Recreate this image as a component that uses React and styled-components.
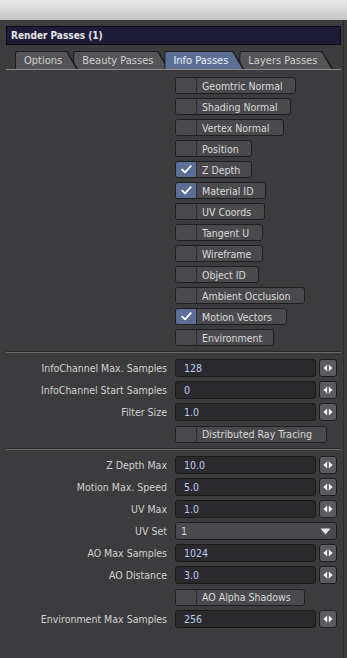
import React from "react";
import styled, { createGlobalStyle } from "styled-components";

const GlobalStyle = createGlobalStyle`
  html, body {
    margin: 0;
    padding: 0;
    background: #3c3c3e;
  }
  body {
    font-family: "DejaVu Sans Condensed", "DejaVu Sans", sans-serif;
  }
`;

const passes = [
  { label: "Geomtric Normal", width: 119 },
  { label: "Shading Normal", width: 114 },
  { label: "Vertex Normal", width: 107 },
  { label: "Position", width: 75 },
  { label: "Z Depth", width: 75, checked: true },
  { label: "Material ID", width: 89, checked: true },
  { label: "UV Coords", width: 88 },
  { label: "Tangent U", width: 86 },
  { label: "Wireframe", width: 86 },
  { label: "Object ID", width: 82 },
  { label: "Ambient Occlusion", width: 128 },
  { label: "Motion Vectors", width: 110, checked: true },
  { label: "Environment", width: 97 },
];

const tabs = ["Options", "Beauty Passes", "Info Passes", "Layers Passes"];

const CheckIcon = () => (
  <svg width="11" height="9" viewBox="0 0 11 9">
    <path
      d="M1.2 4.6 L4 7.4 L9.8 1.2"
      fill="none"
      stroke="#ffffff"
      strokeWidth="1.8"
      strokeLinecap="round"
      strokeLinejoin="round"
    />
  </svg>
);

const SpinIcon = () => (
  <svg width="10" height="8" viewBox="0 0 10 8">
    <path d="M4.2 0.5 L0.5 4 L4.2 7.5 Z" fill="#ffffff" />
    <path d="M5.8 0.5 L9.5 4 L5.8 7.5 Z" fill="#ffffff" />
  </svg>
);

const Toggle = ({ label, width, checked }) => (
  <ToggleButton style={{ width }}>
    <ToggleBox $checked={checked}>{checked && <CheckIcon />}</ToggleBox>
    <ToggleLabel>{label}</ToggleLabel>
  </ToggleButton>
);

const NumberField = ({ label, value }) => (
  <FieldRow>
    <FieldLabel>{label}</FieldLabel>
    <ValueBox>{value}</ValueBox>
    <Spinner>
      <SpinIcon />
    </Spinner>
  </FieldRow>
);

const ButtonRow = ({ label, width }) => (
  <FieldRow>
    <span />
    <Toggle label={label} width={width} />
  </FieldRow>
);

const App = () => {
  return (
    <Window>
      <GlobalStyle />
      <TitleStrip />
      <Panel>
        <Header>Render Passes (1)</Header>
        <TabBar>
          {tabs.map((tab, index) => (
            <Tab key={tab} $active={tab === "Info Passes"} $z={10 - index}>
              <TabFace $active={tab === "Info Passes"}>{tab}</TabFace>
            </Tab>
          ))}
        </TabBar>

        <PassList>
          {passes.map((pass) => (
            <Toggle key={pass.label} {...pass} />
          ))}
        </PassList>

        <Divider />

        <FieldGroup>
          <NumberField label="InfoChannel Max. Samples" value="128" />
          <NumberField label="InfoChannel Start Samples" value="0" />
          <NumberField label="Filter Size" value="1.0" />
          <ButtonRow label="Distributed Ray Tracing" width={150} />
        </FieldGroup>

        <Divider />

        <FieldGroup>
          <NumberField label="Z Depth Max" value="10.0" />
          <NumberField label="Motion Max. Speed" value="5.0" />
          <NumberField label="UV Max" value="1.0" />
          <FieldRow>
            <FieldLabel>UV Set</FieldLabel>
            <Select>
              <span>1</span>
              <svg width="11" height="7" viewBox="0 0 11 7">
                <path d="M0.5 0.5 H10.5 L5.5 6.5 Z" fill="#e6e6e6" />
              </svg>
            </Select>
          </FieldRow>
          <NumberField label="AO Max Samples" value="1024" />
          <NumberField label="AO Distance" value="3.0" />
          <ButtonRow label="AO Alpha Shadows" width={128} />
          <NumberField label="Environment Max Samples" value="256" />
        </FieldGroup>
      </Panel>
    </Window>
  );
};

const Window = styled.div`
  width: 347px;
  height: 658px;
  display: flex;
  flex-direction: column;
  overflow: hidden;
  background: #3c3c3e;
`;

const TitleStrip = styled.div`
  height: 20px;
  flex-shrink: 0;
  background: linear-gradient(#ececec, #c4c4c4);
`;

const Panel = styled.div`
  flex: 1;
  display: flex;
  flex-direction: column;
  padding: 6px 2px 0 6px;
  margin-right: 3px;
  border-right: 1px solid #2c2c2c;
  background: #3c3c3e;
`;

const Header = styled.div`
  height: 17px;
  display: flex;
  align-items: center;
  padding-left: 4px;
  background: #1e1c3a;
  border: 1px solid #0a0a0a;
  color: #e6e6e6;
  font-size: 10px;
  font-weight: bold;
`;

const TabBar = styled.div`
  display: flex;
  margin-top: 5px;
  padding-left: 9px;
  height: 19px;
  align-items: flex-end;
  border-bottom: 1px solid #8c8c8c;
`;

const Tab = styled.div`
  position: relative;
  flex-shrink: 0;
  z-index: ${(p) => (p.$active ? 20 : p.$z)};
  margin-right: -5px;
  padding: 1px 1px 0 1px;
  background: #1c1c1c;
  border-radius: 3px 0 0 0;
  clip-path: polygon(0 0, calc(100% - 11px) 0, 100% 100%, 0 100%);
`;

const TabFace = styled.div`
  height: 17px;
  display: flex;
  align-items: center;
  padding: 0 15px 0 8px;
  border-radius: 2px 0 0 0;
  white-space: nowrap;
  background: ${(p) => (p.$active ? "#5b6f96" : "#555559")};
  color: ${(p) => (p.$active ? "#eef0f6" : "#cfcfcf")};
  font-size: 11px;
  clip-path: polygon(0 0, calc(100% - 11px) 0, calc(100% - 1px) 100%, 0 100%);
`;

const PassList = styled.div`
  display: flex;
  flex-direction: column;
  align-items: flex-start;
  gap: 4px;
  padding: 7px 0 0 169px;
`;

const ToggleButton = styled.div`
  height: 15px;
  display: flex;
  border: 1px solid #1e1e1e;
  border-radius: 3px;
  background: #4a4a4e;
  overflow: hidden;
  flex-shrink: 0;
`;

const ToggleBox = styled.div`
  width: 20px;
  flex-shrink: 0;
  display: flex;
  align-items: center;
  justify-content: center;
  border-right: 1px solid #2e2e30;
  background: ${(p) => (p.$checked ? "#5b6f96" : "#4a4a4e")};
`;

const ToggleLabel = styled.div`
  display: flex;
  align-items: center;
  padding-left: 5px;
  color: #dadada;
  font-size: 10.5px;
  white-space: nowrap;
`;

const Divider = styled.div`
  height: 1px;
  margin: 5px 0 6px;
  background: #6a6a6a;
  border-top: 1px solid #2a2a2a;
`;

const FieldGroup = styled.div`
  display: flex;
  flex-direction: column;
  gap: 4px;
`;

const FieldRow = styled.div`
  display: grid;
  grid-template-columns: 161px 141px 18px;
  column-gap: 8px;
  height: 18px;
  align-items: center;

  & > :nth-child(3) {
    margin-left: -5px;
  }
`;

const FieldLabel = styled.div`
  text-align: right;
  color: #d2d2d2;
  font-size: 10.5px;
  white-space: nowrap;
`;

const ValueBox = styled.div`
  height: 16px;
  display: flex;
  align-items: center;
  padding-left: 8px;
  background: #2a2a2d;
  border: 1px solid #1a1a1a;
  border-radius: 3px;
  color: #bccbf4;
  font-size: 10.5px;
`;

const Spinner = styled.div`
  width: 16px;
  height: 16px;
  display: flex;
  align-items: center;
  justify-content: center;
  background: #5c5c60;
  border: 1px solid #1c1c1c;
  border-radius: 3px;
`;

const Select = styled.div`
  grid-column: 2 / span 2;
  height: 16px;
  margin-right: 5px;
  display: flex;
  align-items: center;
  justify-content: space-between;
  padding: 0 5px 0 5px;
  background: #4a4a4e;
  border: 1px solid #1c1c1c;
  border-radius: 3px;
  color: #dadada;
  font-size: 10.5px;
`;

export default App;
